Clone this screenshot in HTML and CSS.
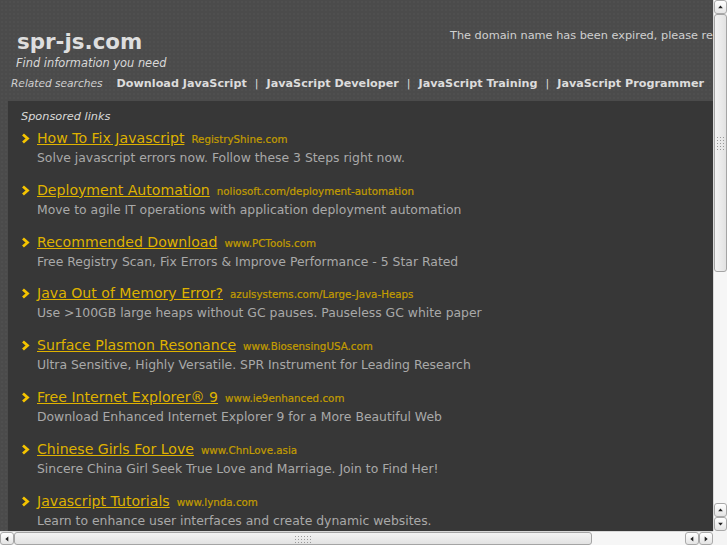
FILE: index.html
```html
<!DOCTYPE html>
<html>
<head>
<meta charset="utf-8">
<title>spr-js.com</title>
<link rel="stylesheet" href="styles.css">
</head>
<body>
<div class="frame">
  <div class="viewport">
    <div class="page">
      <header class="header">
        <div class="top-row">
          <div class="brand">
            <div class="site">spr-js.com</div>
            <div class="tagline">Find information you need</div>
          </div>
          <div class="notice">The domain name has been expired, please renew it with your registrar</div>
        </div>
        <nav class="related">
          <span class="related-label">Related searches</span>
          <a class="rlink" href="#">Download JavaScript</a>
          <span class="sep">|</span>
          <a class="rlink" href="#">JavaScript Developer</a>
          <span class="sep">|</span>
          <a class="rlink" href="#">JavaScript Training</a>
          <span class="sep">|</span>
          <a class="rlink" href="#">JavaScript Programmer</a>
        </nav>
      </header>
      <main class="content">
        <div class="sponsored">Sponsored links</div>
        <ul class="ads">
          <li class="ad">
            <div class="ad-head"><svg class="chev" viewBox="0 0 9 11"><polyline points="2,1.5 6.5,5.5 2,9.5"/></svg><a class="ad-title" href="#">How To Fix Javascript</a><span class="ad-url">RegistryShine.com</span></div>
            <div class="ad-desc">Solve javascript errors now. Follow these 3 Steps right now.</div>
          </li>
          <li class="ad">
            <div class="ad-head"><svg class="chev" viewBox="0 0 9 11"><polyline points="2,1.5 6.5,5.5 2,9.5"/></svg><a class="ad-title" href="#">Deployment Automation</a><span class="ad-url">noliosoft.com/deployment-automation</span></div>
            <div class="ad-desc">Move to agile IT operations with application deployment automation</div>
          </li>
          <li class="ad">
            <div class="ad-head"><svg class="chev" viewBox="0 0 9 11"><polyline points="2,1.5 6.5,5.5 2,9.5"/></svg><a class="ad-title" href="#">Recommended Download</a><span class="ad-url">www.PCTools.com</span></div>
            <div class="ad-desc">Free Registry Scan, Fix Errors &amp; Improve Performance - 5 Star Rated</div>
          </li>
          <li class="ad">
            <div class="ad-head"><svg class="chev" viewBox="0 0 9 11"><polyline points="2,1.5 6.5,5.5 2,9.5"/></svg><a class="ad-title" href="#">Java Out of Memory Error?</a><span class="ad-url">azulsystems.com/Large-Java-Heaps</span></div>
            <div class="ad-desc">Use &gt;100GB large heaps without GC pauses. Pauseless GC white paper</div>
          </li>
          <li class="ad">
            <div class="ad-head"><svg class="chev" viewBox="0 0 9 11"><polyline points="2,1.5 6.5,5.5 2,9.5"/></svg><a class="ad-title" href="#">Surface Plasmon Resonance</a><span class="ad-url">www.BiosensingUSA.com</span></div>
            <div class="ad-desc">Ultra Sensitive, Highly Versatile. SPR Instrument for Leading Research</div>
          </li>
          <li class="ad">
            <div class="ad-head"><svg class="chev" viewBox="0 0 9 11"><polyline points="2,1.5 6.5,5.5 2,9.5"/></svg><a class="ad-title" href="#">Free Internet Explorer® 9</a><span class="ad-url">www.ie9enhanced.com</span></div>
            <div class="ad-desc">Download Enhanced Internet Explorer 9 for a More Beautiful Web</div>
          </li>
          <li class="ad">
            <div class="ad-head"><svg class="chev" viewBox="0 0 9 11"><polyline points="2,1.5 6.5,5.5 2,9.5"/></svg><a class="ad-title" href="#">Chinese Girls For Love</a><span class="ad-url">www.ChnLove.asia</span></div>
            <div class="ad-desc">Sincere China Girl Seek True Love and Marriage. Join to Find Her!</div>
          </li>
          <li class="ad">
            <div class="ad-head"><svg class="chev" viewBox="0 0 9 11"><polyline points="2,1.5 6.5,5.5 2,9.5"/></svg><a class="ad-title" href="#">Javascript Tutorials</a><span class="ad-url">www.lynda.com</span></div>
            <div class="ad-desc">Learn to enhance user interfaces and create dynamic websites.</div>
          </li>
        </ul>
      </main>
    </div>
  </div>
  <div class="vbar">
    <div class="sbtn"><svg viewBox="0 0 14 14"><polygon points="4,8.5 10,8.5 7,5"/></svg></div>
    <div class="vthumb"><div class="grip vgrip"></div></div>
    <div class="vtrack"></div>
    <div class="sbtn"><svg viewBox="0 0 14 14"><polygon points="4,8.5 10,8.5 7,5"/></svg></div>
    <div class="sbtn"><svg viewBox="0 0 14 14"><polygon points="4,5.5 10,5.5 7,9"/></svg></div>
  </div>
  <div class="hbar">
    <div class="sbtn"><svg viewBox="0 0 14 14"><polygon points="8.5,4 8.5,10 5,7"/></svg></div>
    <div class="hthumb"><div class="grip hgrip"></div></div>
    <div class="htrack"></div>
    <div class="sbtn"><svg viewBox="0 0 14 14"><polygon points="8.5,4 8.5,10 5,7"/></svg></div>
    <div class="sbtn"><svg viewBox="0 0 14 14"><polygon points="5.5,4 5.5,10 9,7"/></svg></div>
  </div>
  <div class="corner"></div>
</div>
</body>
</html>
```

FILE: styles.css
```css
html, body {
  margin: 0;
  padding: 0;
  overflow: hidden;
  background: #f2f2f2;
}

.frame {
  display: grid;
  grid-template-columns: 713px 14px;
  grid-template-rows: 531px 14px;
  width: 727px;
  height: 545px;
}

.viewport {
  overflow: hidden;
  background: #4b4b4b;
  font-family: "DejaVu Sans", sans-serif;
}

.page {
  width: 900px;
  background: #4b4b4b;
  background-image: radial-gradient(rgba(255,255,255,0.025) 1px, transparent 1px);
  background-size: 4px 4px;
}

.header {
  padding-top: 27px;
  height: 74px;
  box-sizing: content-box;
}

.top-row {
  display: flex;
  align-items: flex-start;
}

.brand {
  width: 450px;
  padding-left: 17px;
  padding-top: 2px;
  box-sizing: border-box;
}

.site {
  font-size: 21.4px;
  font-weight: bold;
  line-height: 25px;
  color: #dedede;
}

.tagline {
  font-size: 11.4px;
  font-style: italic;
  line-height: 14px;
  color: #d8d8d8;
  margin-left: -1px;
  margin-top: 2px;
}

.notice {
  font-size: 11.3px;
  line-height: 16px;
  color: #d0d0d0;
  white-space: nowrap;
  padding-top: 1px;
}

.related {
  display: flex;
  align-items: center;
  height: 16px;
  margin-top: 5px;
  padding-left: 11px;
  white-space: nowrap;
}

.related-label {
  font-size: 10.6px;
  font-style: italic;
  color: #cfcfcf;
  margin-right: 14px;
}

.rlink {
  font-size: 11.2px;
  font-weight: bold;
  color: #dcdcdc;
  text-decoration: none;
}

.sep {
  font-size: 11.2px;
  color: #dcdcdc;
  margin: 0 8px;
}

.content {
  margin-left: 8px;
  background: #373737;
  padding: 8px 0 20px 13px;
  min-height: 500px;
}

.sponsored {
  font-size: 11.3px;
  font-style: italic;
  line-height: 16px;
  color: #dadada;
}

.ads {
  list-style: none;
  margin: 4px 0 0 0;
  padding: 0;
}

.ad {
  margin-bottom: 13.8px;
}

.ad-head {
  display: flex;
  align-items: center;
  height: 19px;
  white-space: nowrap;
}

.chev {
  width: 9px;
  height: 11px;
  margin-right: 7px;
  flex: none;
}

.chev polyline {
  fill: none;
  stroke: #f5c400;
  stroke-width: 2.8;
}

.ad-title {
  font-size: 14.1px;
  color: #dfb200;
  text-decoration: underline;
  line-height: 19px;
}

.ad-url {
  font-size: 10.3px;
  color: #c39d00;
  margin-left: 7px;
  line-height: 19px;
  padding-top: 2px;
  -webkit-text-stroke: 0.2px #c39d00;
}

.ad-desc {
  font-size: 12.4px;
  line-height: 19px;
  color: #a9a9a9;
  padding-left: 16px;
  white-space: nowrap;
}

/* scrollbars */
.vbar {
  display: flex;
  flex-direction: column;
  background: #f6f6f6;
  border-left: 1px solid #d8d8d8;
}

.hbar {
  display: flex;
  flex-direction: row;
  background: #f6f6f6;
  border-top: 1px solid #d8d8d8;
}

.corner {
  background: #f4f4f4;
}

.sbtn {
  width: 13px;
  height: 13px;
  flex: none;
  box-sizing: border-box;
  border: 1px solid #a9a9a9;
  border-radius: 3px;
  background: linear-gradient(#ffffff, #e4e4e4);
  display: flex;
  align-items: center;
  justify-content: center;
}

.vbar .sbtn { height: 14px; }
.hbar .sbtn { width: 14px; }

.sbtn svg {
  width: 12px;
  height: 12px;
}

.sbtn polygon {
  fill: #222;
}

.vthumb {
  height: 258px;
  flex: none;
  box-sizing: border-box;
  border: 1px solid #a4a4a4;
  border-radius: 3px;
  background: linear-gradient(90deg, #f3f3f3, #e2e2e2);
  display: flex;
  align-items: center;
  justify-content: center;
}

.vtrack { flex: 1; }

.hthumb {
  width: 578px;
  flex: none;
  box-sizing: border-box;
  border: 1px solid #a4a4a4;
  border-radius: 3px;
  background: linear-gradient(#f3f3f3, #e2e2e2);
  display: flex;
  align-items: center;
  justify-content: center;
}

.htrack { flex: 1; }

.grip {
  background-image: radial-gradient(#9a9a9a 0.7px, transparent 0.9px);
  background-size: 3px 3px;
}

.vgrip { width: 9px; height: 14px; }
.hgrip { width: 18px; height: 8px; }
```
